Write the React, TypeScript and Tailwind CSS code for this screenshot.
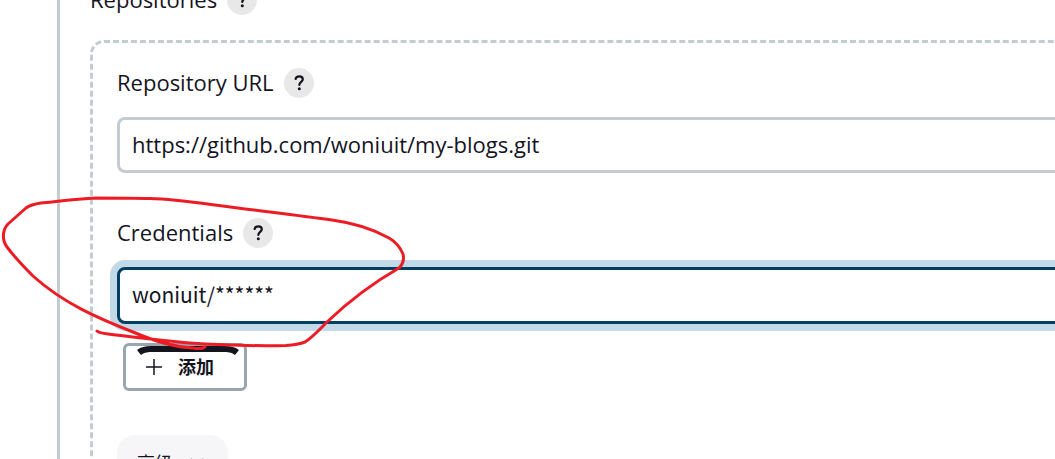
import type { ReactNode } from "react";

function HelpButton({ topic }: { topic: string }) {
  return (
    <button
      type="button"
      aria-label={`Help for ${topic}`}
      className="flex size-[30px] items-center justify-center rounded-full bg-[#e8e8e8]"
    >
      <svg viewBox="0 0 30 30" className="size-[30px]" fill="none" stroke="#14141f" strokeWidth="2.2">
        <path d="M11.6 11C11.9 9.3 13.2 8.3 15.2 8.3C17.4 8.3 18.8 9.4 18.8 11.2C18.8 13.8 15.3 14 15.3 17" strokeLinecap="round" />
        <circle cx="15.3" cy="20.8" r="1.5" fill="#14141f" stroke="none" />
      </svg>
    </button>
  );
}

function FieldHeader({ topic, children }: { topic: string; children: ReactNode }) {
  return (
    <div className="flex h-[30px] items-center gap-2.5">
      {children}
      <HelpButton topic={topic} />
    </div>
  );
}

function Annotation() {
  return (
    <svg
      viewBox="0 0 420 360"
      className="pointer-events-none absolute top-0 left-0 h-[360px] w-[420px]"
      fill="none"
      stroke="#ed1c24"
      strokeWidth="3"
      strokeLinecap="round"
      strokeLinejoin="round"
      aria-hidden="true"
    >
      <path d="M97 331C99 333 103 333.5 108 334C142 338 171 342 205 344C233 345.5 260 346 286 345.5C294 345 300 344 305 342C313 337 320 329 327 322C348 302 371 284 399 268C403 264 404.5 260 403 254C400 247 396 242 389 238C373 229 354 223 332 220C296 215 252 210 215 205C193 202 173 199 150 198.5C132 198 114 198 96 198C78 199 61 201 41 203C34 204 30 205 26 208L8 224C5 227 4 230 3.5 234C3 239 4 243 7 247C13 255 23 266 33 276C64 304 100 319 133 332C154 341 173 347 193 348C198 349 202 349 205 347" />
    </svg>
  );
}

export default function App() {
  return (
    <main className="relative h-screen overflow-hidden bg-white pl-[57px] font-['Open_Sans','Noto_Sans_CJK_SC',sans-serif] text-[22px] leading-[28px] text-[#14141f]">
      <section className="-mt-[15px] -mr-10 min-h-screen border-l-[3px] border-[#c3ccd1] pb-20 pl-[30px]">
        <FieldHeader topic="Repositories">
          <h2 className="pb-0.5">Repositories</h2>
        </FieldHeader>
        <div className="mt-[25px] rounded-[14px] border-[3px] border-dashed border-[#c3ccd1] pt-[25px] pr-6 pb-20 pl-6">
          <FieldHeader topic="Repository URL">
            <label htmlFor="repository-url" className="pb-0.5">Repository URL</label>
          </FieldHeader>
          <input
            id="repository-url"
            type="text"
            defaultValue="https://github.com/woniuit/my-blogs.git"
            className="mt-[19px] block h-14 w-full rounded-lg border-[3px] border-[#c3ccd1] bg-white px-3 pb-0.5 outline-none"
          />
          <div className="mt-[45px]">
            <FieldHeader topic="Credentials">
              <label htmlFor="credentials" className="pb-0.5">Credentials</label>
            </FieldHeader>
          </div>
          <select
            id="credentials"
            className="mt-[19px] block h-[57px] w-full appearance-none rounded-lg border-[3px] border-[#003e62] bg-white px-3 pb-1 font-['Noto_Sans_CJK_SC',sans-serif] text-[21px] ring-[7px] ring-[#c2d9e7] outline-none"
          >
            <option>woniuit/******</option>
          </select>
          <button
            type="button"
            className="relative mt-[19px] ml-1.5 flex h-12 w-[124px] items-center gap-4 rounded-md border-[3px] border-[#98a6ad] pl-5 text-lg font-bold"
          >
            <svg viewBox="0 0 16 16" className="size-4" fill="none" stroke="#14141f" strokeWidth="1.5">
              <path d="M8 0V16M0 8H16" />
            </svg>
            添加
            <svg viewBox="0 0 102 9" className="absolute top-0 left-[11px] h-[9px] w-[102px]" fill="#14141f" aria-hidden="true">
              <path d="M0 4C4 1 8 0 14 0H88C94 0 98 1 102 4L98 9C94 6 91 6 86 6H16C11 6 8 6 4 9Z" />
            </svg>
          </button>
          <button
            type="button"
            className="mt-11 flex h-14 w-[111px] items-center gap-4 rounded-[18px] bg-[#f6f6f9] pl-5 text-lg font-normal"
          >
            高级
            <svg viewBox="0 0 16 10" className="h-2.5 w-4" fill="none" stroke="#14141f" strokeWidth="1.5">
              <path d="M2 1L8 7L14 1" />
            </svg>
          </button>
        </div>
      </section>
      <Annotation />
    </main>
  );
}
